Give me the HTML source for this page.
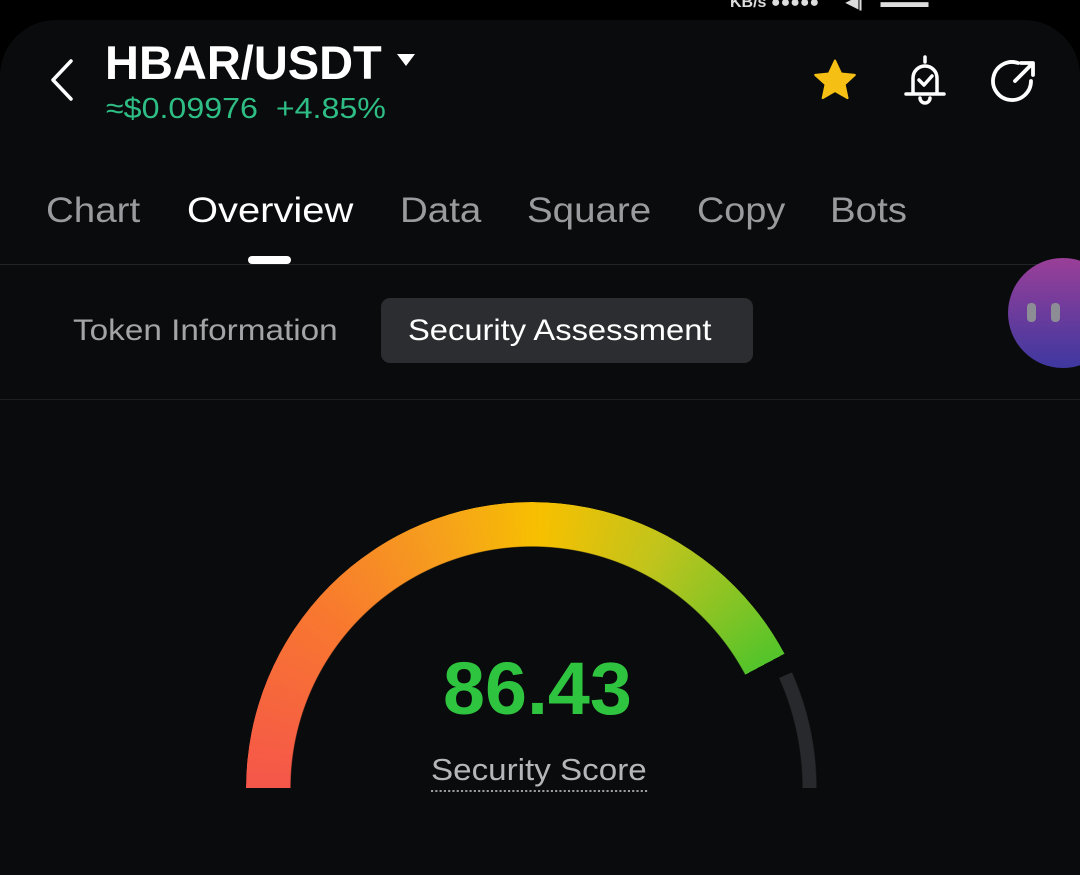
<!DOCTYPE html>
<html><head><meta charset="utf-8"><style>
*{margin:0;padding:0;box-sizing:border-box}
html,body{width:1080px;height:875px;overflow:hidden}
body{background:#000;position:relative;font-family:"Liberation Sans",sans-serif}
.panel{position:absolute;left:0;top:20px;width:1080px;height:855px;background:#0a0b0c;border-radius:56px 56px 0 0}
.a{position:absolute;white-space:nowrap;transform-origin:left top}
.tab{font-size:35px;color:#9a9b9e;top:191px}
.clip{position:absolute;left:0;top:480px;width:1080px;height:310px;overflow:hidden}
.gauge{position:absolute;left:246px;top:22px;width:572px;height:572px;border-radius:50%}
</style></head><body>
<div class="a" style="left:730px;top:-8px;font-size:16px;color:#ddd;font-weight:bold">KB/s ●●●●● &nbsp;&nbsp;&nbsp;&nbsp; ◀| &nbsp;&nbsp; ▬▬▬</div>
<div class="panel"></div>
<svg class="a" style="left:44px;top:58px" width="34" height="44" viewBox="0 0 34 44"><path d="M27 3 L9 22 L27 41" fill="none" stroke="#fff" stroke-width="3.5" stroke-linecap="round" stroke-linejoin="round"/></svg>
<div class="a" style="left:105px;top:35px;font-size:47px;font-weight:bold;color:#fff">HBAR/USDT</div>
<svg class="a" style="left:396px;top:52px" width="20" height="16"><path d="M1 2 H19 L10 14Z" fill="#fff"/></svg>
<div class="a" style="left:106px;top:93px;font-size:29px;color:#2ebd85;transform:scaleX(1.11)">≈$0.09976 &nbsp;+4.85%</div>
<svg class="a" style="left:810px;top:56px" width="50" height="50" viewBox="0 0 24 24"><path d="M12 2.2l2.9 6.2 6.6.7-4.9 4.5 1.4 6.6L12 16.8l-5.9 3.4 1.4-6.6L2.5 9.1l6.6-.7z" fill="#f5bf14" stroke="#f5bf14" stroke-width="1" stroke-linejoin="round"/></svg>
<svg class="a" style="left:900px;top:54px" width="50" height="52" viewBox="0 0 50 52"><path d="M25 3v5M13 40V24a12 12 0 0 1 24 0v16M6 40h38M20 44a5 5 0 0 0 10 0" fill="none" stroke="#fff" stroke-width="3.5" stroke-linecap="round"/><path d="M19 26l5 5 8-9" fill="none" stroke="#fff" stroke-width="3.5" stroke-linecap="round" stroke-linejoin="round"/></svg>
<svg class="a" style="left:988px;top:56px" width="52" height="50" viewBox="0 0 52 50"><path d="M30 7A19 19 0 1 0 43 25" fill="none" stroke="#fff" stroke-width="3.8" stroke-linecap="round"/><path d="M27 25L44 8M33 7h12v12" fill="none" stroke="#fff" stroke-width="3.8" stroke-linecap="round" stroke-linejoin="round"/></svg>
<div class="a tab" style="left:46px;transform:scaleX(1.1)">Chart</div>
<div class="a tab" style="left:187px;color:#fff;transform:scaleX(1.14)">Overview</div>
<div class="a tab" style="left:400px;transform:scaleX(1.1)">Data</div>
<div class="a tab" style="left:527px;transform:scaleX(1.1)">Square</div>
<div class="a tab" style="left:697px;transform:scaleX(1.08)">Copy</div>
<div class="a tab" style="left:830px;transform:scaleX(1.1)">Bots</div>
<div class="a" style="left:248px;top:256px;width:43px;height:8px;border-radius:4px;background:#fff"></div>
<div class="a" style="left:0;top:264px;width:1080px;height:1px;background:#232427"></div>
<div class="a" style="left:73px;top:314px;font-size:30px;color:#a3a4a7;transform:scaleX(1.11)">Token Information</div>
<div class="a" style="left:381px;top:298px;width:372px;height:65px;border-radius:9px;background:#2c2d30"></div>
<div class="a" style="left:408px;top:314px;font-size:30px;color:#fff;transform:scaleX(1.09)">Security Assessment</div>
<div class="a" style="left:0;top:399px;width:1080px;height:1px;background:#1e1f22"></div>
<div class="a" style="left:1008px;top:258px;width:72px;height:110px;overflow:hidden">
<div style="position:absolute;left:0;top:0;width:110px;height:110px;border-radius:50%;background:linear-gradient(#9a3f98,#3e38a0)"></div>
<div style="position:absolute;left:19px;top:45px;width:9px;height:19px;border-radius:4px;background:#8d8d95"></div>
<div style="position:absolute;left:43px;top:45px;width:9px;height:19px;border-radius:4px;background:#8d8d95"></div>
</div>
<div class="clip">
<div class="gauge" style="background:conic-gradient(from 270deg,#f5564a 0deg,#f8782f 40deg,#f6a01c 70deg,#f7c000 92deg,#c0c41c 118deg,#7cc426 140deg,#52c42a 152deg,transparent 152deg);-webkit-mask:radial-gradient(circle,transparent 241px,#000 242px,#000 286px,transparent 287px);mask:radial-gradient(circle,transparent 241px,#000 242px,#000 286px,transparent 287px)"></div>
<div class="gauge" style="background:conic-gradient(from 270deg,transparent 156deg,#28292c 156deg,#28292c 180deg,transparent 180deg);-webkit-mask:radial-gradient(circle,transparent 270px,#000 271px,#000 284px,transparent 285px);mask:radial-gradient(circle,transparent 270px,#000 271px,#000 284px,transparent 285px)"></div>
</div>
<div class="a" style="left:443px;top:646px;font-size:74px;font-weight:bold;color:#2fc43f;transform:scaleX(1.02)">86.43</div>
<div class="a" style="left:431px;top:752px;font-size:31px;color:#b5b6b9;border-bottom:2px dotted #9a9b9e;padding-bottom:2px;transform:scaleX(1.07)">Security Score</div>
</body></html>
